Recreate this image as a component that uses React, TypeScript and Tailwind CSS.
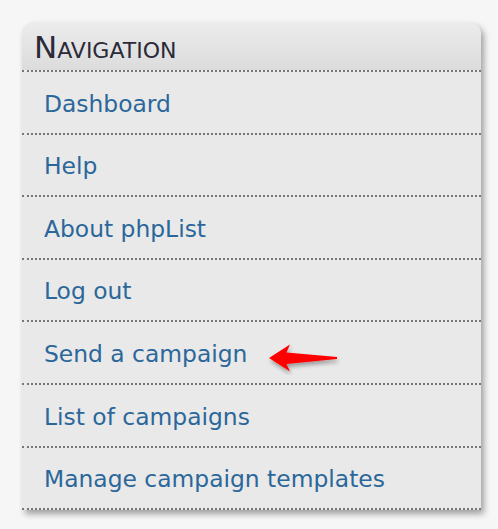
import React from 'react';

const links = [
  'Dashboard',
  'Help',
  'About phpList',
  'Log out',
  'Send a campaign',
  'List of campaigns',
  'Manage campaign templates',
];

function RedArrow() {
  return (
    <svg width="76" height="34" viewBox="0 0 76 34" className="ml-[20px] translate-y-[3px]">
      <defs>
        <filter id="sh" x="-20%" y="-40%" width="140%" height="180%">
          <feDropShadow dx="1" dy="3" stdDeviation="2" floodColor="#000" floodOpacity="0.35" />
        </filter>
      </defs>
      <path
        d="M2 17 L23 3.5 L19.5 11.5 L70 16 L70 18 L19.5 23 L23 30.5 Z"
        fill="#ff0000"
        filter="url(#sh)"
      />
    </svg>
  );
}

export default function App() {
  return (
    <div className="min-h-[529px] w-[498px] bg-[#f6f6f6] pl-[22px] pt-[22px]">
      <div className="w-[459px] overflow-hidden rounded-t-[12px] bg-[#e9e9e9] shadow-[3px_4px_6px_rgba(0,0,0,0.35)]">
        <div className="flex h-[50px] items-center border-b-2 border-dotted border-[#777] bg-gradient-to-b from-[#ececec] to-[#dcdcdc] pl-[12px] pt-[3px]">
          <h2
            className="text-[31px] leading-none text-[#2a2a38] [font-variant:small-caps]"
            style={{ fontFamily: '"DejaVu Sans", Verdana, sans-serif' }}
          >
            Navigation
          </h2>
        </div>
        {links.map((l) => (
          <div
            key={l}
            className="flex h-[62.6px] items-center border-b-2 border-dotted border-[#777] pl-[22px] pt-[4px]"
          >
            <a
              href="#"
              className="text-[23.4px] leading-none text-[#2b679a]"
              style={{ fontFamily: '"DejaVu Sans", Verdana, sans-serif' }}
            >
              {l}
            </a>
            {l === 'Send a campaign' && <RedArrow />}
          </div>
        ))}
      </div>
    </div>
  );
}
